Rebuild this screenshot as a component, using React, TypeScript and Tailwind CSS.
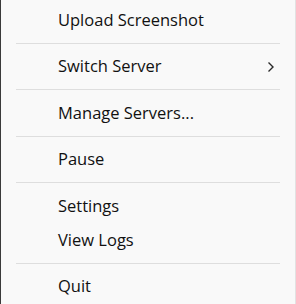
import React from "react";

const Item = ({ label, sub }: { label: string; sub?: boolean }) => (
  <div className="h-[34px] flex items-center pl-[57px] pr-[20px] text-[16.5px] text-[#111111]">
    <span className="flex-1 leading-none">{label}</span>
    {sub && (
      <svg width="8" height="12" viewBox="0 0 8 12" className="shrink-0">
        <path d="M1.5 1.5 L6 6 L1.5 10.5" fill="none" stroke="#2a2a2a" strokeWidth="1.4" />
      </svg>
    )}
  </div>
);

const Sep = () => (
  <div className="h-[12.5px] flex items-center px-[15px]">
    <div className="h-px w-full bg-[#dedede]" />
  </div>
);

export default function App() {
  return (
    <div
      className="w-[296px] h-[304px] bg-[#f9f9f9] border-l border-l-[#3a3a3a] border-r border-r-[#e2e2e2] overflow-hidden"
      style={{ fontFamily: '"Open Sans", "Noto Sans", sans-serif' }}
    >
      <div className="pt-[3px]">
        <Item label="Upload Screenshot" />
        <Sep />
        <Item label="Switch Server" sub />
        <Sep />
        <Item label="Manage Servers..." />
        <Sep />
        <Item label="Pause" />
        <Sep />
        <Item label="Settings" />
        <Item label="View Logs" />
        <Sep />
        <Item label="Quit" />
      </div>
    </div>
  );
}
